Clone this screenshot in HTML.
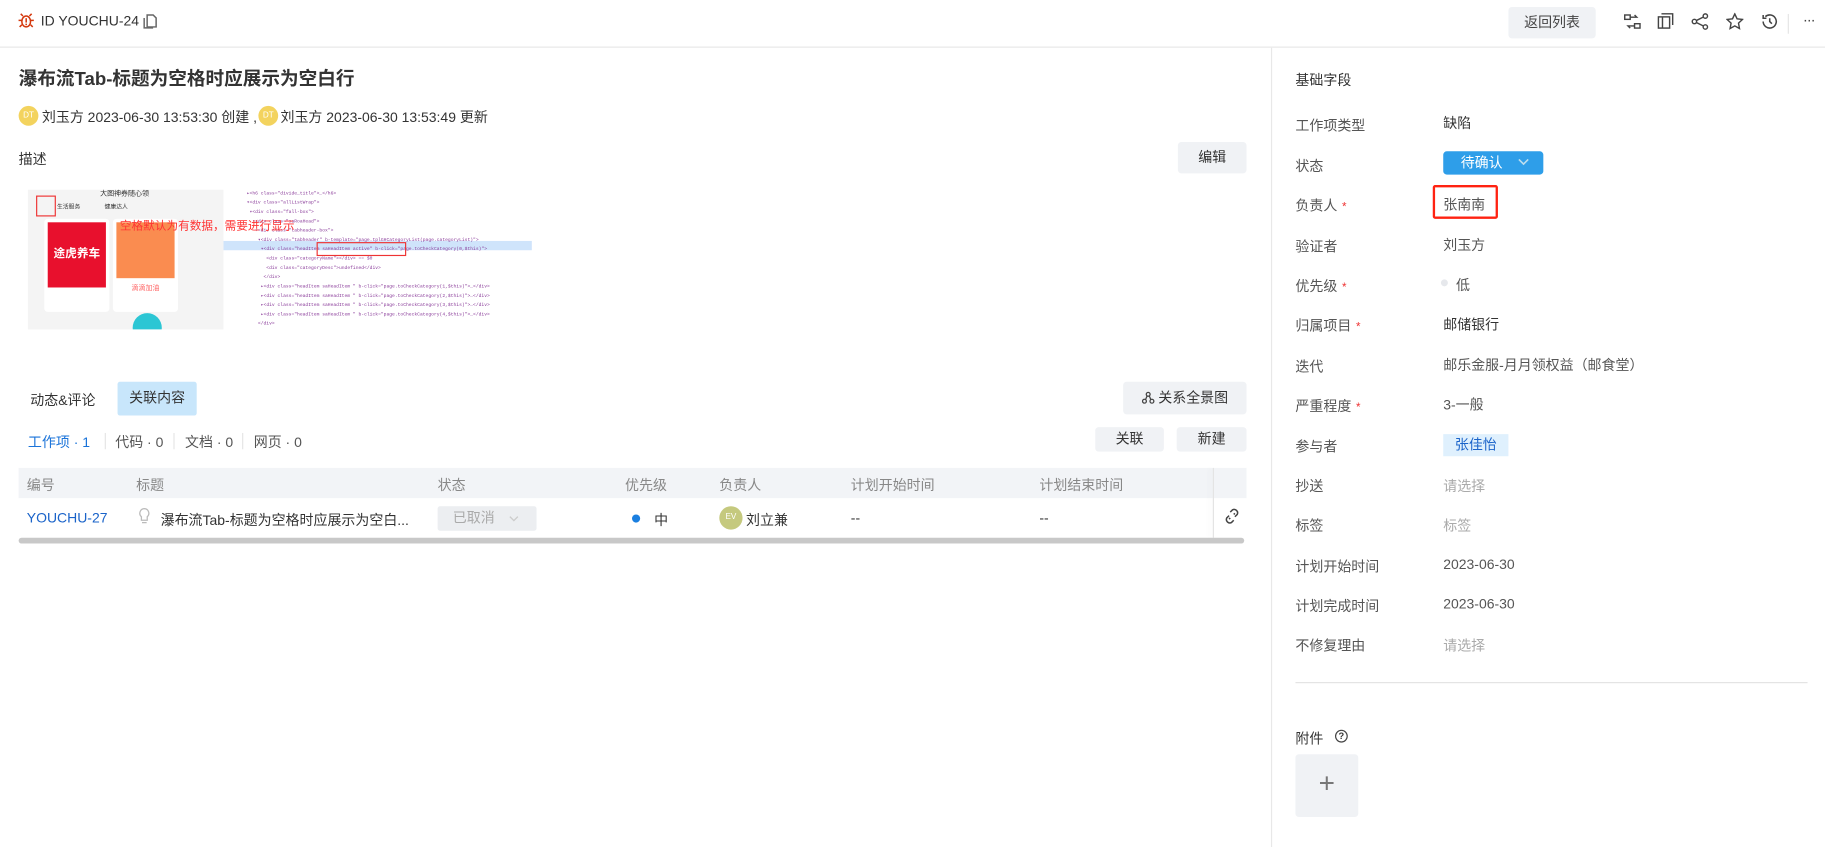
<!DOCTYPE html>
<html><head><meta charset="utf-8"><style>
*{box-sizing:border-box;margin:0;padding:0}
html,body{width:1825px;height:847px;overflow:hidden;background:#fff}
#w{width:1568px;height:728px;transform:scale(1.16390);transform-origin:0 0;position:relative;font-family:"Liberation Sans","Noto Sans CJK SC",sans-serif;color:#333;font-size:12px}
.a{position:absolute;white-space:nowrap}
.btn{position:absolute;background:#f0f2f5;border-radius:3px;text-align:center;color:#333;font-size:12px}
.lab{position:absolute;left:1113px;color:#555;font-size:12px}
.val{position:absolute;left:1240px;color:#333;font-size:12px}
.st{color:#e33;font-size:10px;margin-left:4px}
.gray{color:#aaa}
.th{position:absolute;top:408px;color:#888;font-size:12px}
.ico{position:absolute;top:11px}
</style></head><body><div id="w">
<svg class="a" style="left:15px;top:10px" width="15" height="15" viewBox="0 0 16 16"><g fill="none" stroke="#d4380d" stroke-width="1.4"><ellipse cx="8" cy="9" rx="4" ry="5"/><path d="M5 4l-2-2M11 4l2-2M4 8H1M12 8h3M4 12l-2 2M12 12l2 2"/></g><rect x="7.3" y="6" width="1.4" height="4" fill="#d4380d"/><rect x="7.3" y="11" width="1.4" height="1.4" fill="#d4380d"/></svg>
<div class="a" style="left:35px;top:11px;font-size:12px;color:#333">ID YOUCHU-24</div>
<svg class="a" style="left:123px;top:11px" width="12" height="14" viewBox="0 0 14 16"><path d="M4 2h6l3 3v9H4zM1 5v10h9" fill="none" stroke="#666" stroke-width="1.5"/></svg>
<div class="a" style="left:0;top:40px;width:1568px;height:1px;background:#e8e8e8"></div>
<div class="btn" style="left:1296px;top:6px;width:75px;height:27px;line-height:27px;font-size:12px;color:#444">返回列表</div>
<svg class="ico a" style="left:1395px" width="15" height="15" viewBox="0 0 16 16" fill="none" stroke="#444" stroke-width="1.3"><rect x="1" y="2" width="5" height="4"/><rect x="10" y="10" width="5" height="4"/><path d="M6 4h6l-2-2M10 12H4l2 2"/></svg>
<svg class="ico a" style="left:1424px" width="14" height="14" viewBox="0 0 16 16" fill="none" stroke="#444" stroke-width="1.4"><rect x="1" y="4" width="11" height="11"/><path d="M4 1h11v11"/><path d="M5 4v11"/></svg>
<svg class="ico a" style="left:1453px" width="15" height="15" viewBox="0 0 16 16" fill="none" stroke="#444" stroke-width="1.3"><circle cx="3" cy="8" r="2"/><circle cx="13" cy="3" r="2"/><circle cx="13" cy="13" r="2"/><path d="M5 7l6-3M5 9l6 3"/></svg>
<svg class="ico a" style="left:1483px" width="15" height="15" viewBox="0 0 16 16" fill="none" stroke="#444" stroke-width="1.3"><path d="M8 1l2.1 4.5 4.9.6-3.6 3.4.9 4.9L8 12l-4.3 2.4.9-4.9L1 6.1l4.9-.6z"/></svg>
<svg class="ico a" style="left:1513px" width="15" height="15" viewBox="0 0 16 16" fill="none" stroke="#444" stroke-width="1.4"><path d="M2 8a6 6 0 1 0 2-4.5M2 2v3h3M8 5v3l2 2"/></svg>
<div class="a" style="left:1536px;top:12px;width:1px;height:17px;background:#e5e5e5"></div>
<div class="a" style="left:1549px;top:9px;font-size:13px;color:#444;letter-spacing:-1px">···</div>
<div class="a" style="left:16px;top:54px;font-size:16px;font-weight:bold;color:#333">瀑布流Tab-标题为空格时应展示为空白行</div>
<div class="a" style="left:16px;top:91px;width:17px;height:17px;border-radius:50%;background:#f3d35e;color:#fff;font-size:7px;line-height:17px;text-align:center">DT</div>
<div class="a" style="left:36px;top:92px;font-size:12px;color:#333">刘玉方 2023-06-30 13:53:30 创建 ,</div>
<div class="a" style="left:222px;top:91px;width:17px;height:17px;border-radius:50%;background:#f3d35e;color:#fff;font-size:7px;line-height:17px;text-align:center">DT</div>
<div class="a" style="left:241px;top:92px;font-size:12px;color:#333">刘玉方 2023-06-30 13:53:49 更新</div>
<div class="a" style="left:16px;top:128px;font-size:12px;color:#333">描述</div>
<div class="btn" style="left:1012px;top:122px;width:59px;height:27px;line-height:27px;font-size:12px">编辑</div>
<div class="a" style="left:24px;top:163px;width:168px;height:120px;background:#f4f4f4;overflow:hidden">
 <div class="a" style="left:62px;top:-2px;font-size:6px;color:#333">大图神券随心领</div>
 <div class="a" style="left:7px;top:5px;width:17px;height:18px;border:1px solid #e33"></div>
 <div class="a" style="left:25px;top:11px;font-size:5px;color:#333">生活服务 &nbsp;&nbsp;&nbsp;&nbsp;&nbsp;&nbsp;&nbsp;&nbsp;&nbsp;&nbsp;&nbsp;&nbsp;&nbsp;&nbsp;健康达人</div>
 <div class="a" style="left:14px;top:25px;width:56px;height:80px;background:#fff;border-radius:3px"><div style="margin:3px;height:56px;background:#e8102d;color:#fff;font-size:10px;font-weight:bold;line-height:56px;text-align:center">途虎养车</div></div>
 <div class="a" style="left:73px;top:25px;width:56px;height:80px;background:#fff;border-radius:3px"><div style="margin:3px;height:48px;background:#fa8c50"></div><div style="font-size:6px;color:#f66;text-align:center">滴滴加油</div></div>
 <div class="a" style="left:90px;top:106px;width:25px;height:25px;border-radius:50%;background:#2cc6d4"></div>
</div>
<div class="a" style="left:192px;top:163px;width:265px;height:120px;background:#fff;overflow:hidden;font-family:'Liberation Mono',monospace;font-size:4px;color:#8a3c9a;line-height:8px;padding-left:20px">
 <div style="position:absolute;left:0;top:44px;width:265px;height:8px;background:#cfe4fb"></div>
 <div style="position:relative">▸&lt;h6 class="divide_title"&gt;…&lt;/h6&gt;<br>▾&lt;div class="allListWrap"&gt;<br>&nbsp;▾&lt;div class="fall-box"&gt;<br>&nbsp;&nbsp;▾&lt;div class="saRoaHead"&gt;<br>&nbsp;&nbsp;&nbsp;▾&lt;div class="tabheader-box"&gt;<br>&nbsp;&nbsp;&nbsp;&nbsp;▾&lt;div class="tabheader" b-template="page.tplGHCategoryList(page.categoryList)"&gt;<br>&nbsp;&nbsp;&nbsp;&nbsp;&nbsp;▾&lt;div class="headItem saHeadItem active" b-click="page.toCheckCategory(0,$this)"&gt;<br>&nbsp;&nbsp;&nbsp;&nbsp;&nbsp;&nbsp;&nbsp;&lt;div class="categoryName"&gt;&lt;/div&gt; == $0<br>&nbsp;&nbsp;&nbsp;&nbsp;&nbsp;&nbsp;&nbsp;&lt;div class="categoryDesc"&gt;undefined&lt;/div&gt;<br>&nbsp;&nbsp;&nbsp;&nbsp;&nbsp;&nbsp;&lt;/div&gt;<br>&nbsp;&nbsp;&nbsp;&nbsp;&nbsp;▸&lt;div class="headItem saHeadItem " b-click="page.toCheckCategory(1,$this)"&gt;…&lt;/div&gt;<br>&nbsp;&nbsp;&nbsp;&nbsp;&nbsp;▸&lt;div class="headItem saHeadItem " b-click="page.toCheckCategory(2,$this)"&gt;…&lt;/div&gt;<br>&nbsp;&nbsp;&nbsp;&nbsp;&nbsp;▸&lt;div class="headItem saHeadItem " b-click="page.toCheckCategory(3,$this)"&gt;…&lt;/div&gt;<br>&nbsp;&nbsp;&nbsp;&nbsp;&nbsp;▸&lt;div class="headItem saHeadItem " b-click="page.toCheckCategory(4,$this)"&gt;…&lt;/div&gt;<br>&nbsp;&nbsp;&nbsp;&nbsp;&lt;/div&gt;<br>&nbsp;&nbsp;&nbsp;&lt;/div&gt;<br>&nbsp;&nbsp;▸&lt;div style="width: 100%; height:100%; overflow: auto;"&gt;…&lt;/div&gt;</div>
 <div class="a" style="left:80px;top:45px;width:77px;height:12px;border:1px solid #e33"></div>
</div>
<div class="a" style="left:103px;top:185px;font-size:10px;color:#f33">空格默认为有数据，需要进行显示</div>
<div class="a" style="left:26px;top:335px;font-size:12px;color:#333">动态&amp;评论</div>
<div class="a" style="left:101px;top:328px;width:68px;height:29px;background:#c8e6fb;border-radius:2px;text-align:center;line-height:29px;font-size:12px;color:#333">关联内容</div>
<div class="btn" style="left:965px;top:328px;width:106px;height:28px;line-height:28px;font-size:12px"><svg width="11" height="11" viewBox="0 0 12 12" style="vertical-align:-1px" fill="none" stroke="#444" stroke-width="1.2"><circle cx="6" cy="3" r="1.8"/><circle cx="2.5" cy="9.5" r="1.8"/><circle cx="9.5" cy="9.5" r="1.8"/><path d="M5 4.5L3.5 8M7 4.5L8.5 8"/></svg> 关系全景图</div>
<div class="a" style="left:24px;top:371px;font-size:12px;color:#1a73d9">工作项 · 1</div>
<div class="a" style="left:90px;top:372px;width:1px;height:14px;background:#e5e5e5"></div>
<div class="a" style="left:99px;top:371px;font-size:12px;color:#555">代码 · 0</div>
<div class="a" style="left:149px;top:372px;width:1px;height:14px;background:#e5e5e5"></div>
<div class="a" style="left:159px;top:371px;font-size:12px;color:#555">文档 · 0</div>
<div class="a" style="left:208px;top:372px;width:1px;height:14px;background:#e5e5e5"></div>
<div class="a" style="left:218px;top:371px;font-size:12px;color:#555">网页 · 0</div>
<div class="btn" style="left:941px;top:367px;width:59px;height:21px;line-height:21px">关联</div>
<div class="btn" style="left:1011px;top:367px;width:60px;height:21px;line-height:21px">新建</div>
<div class="a" style="left:16px;top:402px;width:1055px;height:26px;background:#f2f4f7"></div>
<div class="a" style="left:1042px;top:402px;width:1px;height:60px;background:#e3e3e3;box-shadow:-3px 0 4px rgba(0,0,0,.06)"></div>
<div class="th" style="left:23px">编号</div><div class="th" style="left:117px">标题</div><div class="th" style="left:376px">状态</div><div class="th" style="left:537px">优先级</div><div class="th" style="left:618px">负责人</div><div class="th" style="left:731px">计划开始时间</div><div class="th" style="left:893px">计划结束时间</div>
<div class="a" style="left:23px;top:438px;color:#1a63c9">YOUCHU-27</div>
<svg class="a" style="left:119px;top:436px" width="10" height="15" viewBox="0 0 10 15" fill="none" stroke="#bbb" stroke-width="1.1"><path d="M5 1a4 4 0 0 0-2.5 7v3h5V8A4 4 0 0 0 5 1zM3 13h4"/></svg>
<div class="a" style="left:138px;top:438px;color:#333">瀑布流Tab-标题为空格时应展示为空白...</div>
<div class="a" style="left:376px;top:435px;width:85px;height:21px;background:#eceef1;border-radius:2px;color:#aaa;font-size:12px;line-height:21px;padding-left:13px">已取消<svg style="position:absolute;left:61px;top:8px" width="9" height="6" viewBox="0 0 10 7"><path d="M1 1l4 4 4-4" fill="none" stroke="#ccc" stroke-width="1.3"/></svg></div>
<div class="a" style="left:543px;top:442px;width:7px;height:7px;border-radius:50%;background:#1a7fe0"></div>
<div class="a" style="left:562px;top:438px;color:#333">中</div>
<div class="a" style="left:618px;top:435px;width:20px;height:20px;border-radius:50%;background:#c5c97e;color:#fff;font-size:7px;line-height:20px;text-align:center">EV</div>
<div class="a" style="left:641px;top:438px;color:#333">刘立兼</div>
<div class="a" style="left:731px;top:438px;color:#333">--</div>
<div class="a" style="left:893px;top:438px;color:#333">--</div>
<svg class="a" style="left:1051px;top:436px" width="15" height="15" viewBox="0 0 15 15" fill="none" stroke="#444" stroke-width="1.3"><path d="M6 4l2-2a3 3 0 0 1 4 4l-2 2M9 11l-2 2a3 3 0 0 1-4-4l2-2M5 10l1-1M9 6l1-1"/></svg>
<div class="a" style="left:16px;top:462px;width:1053px;height:5px;background:#c8c8c8;border-radius:3px"></div>
<div class="a" style="left:1092px;top:41px;width:1px;height:687px;background:#e8e8e8"></div>
<div class="a" style="left:1113px;top:60px;font-size:12px;color:#333">基础字段</div>
<div class="lab" style="top:99px">工作项类型</div><div class="val" style="top:97px">缺陷</div>
<div class="lab" style="top:134px">状态</div>
<div class="a" style="left:1240px;top:130px;width:86px;height:20px;background:#2e9ee9;border-radius:3px;color:#fff;font-size:12px;line-height:20px;padding-left:15px">待确认<svg style="position:absolute;left:64px;top:6px" width="10" height="7" viewBox="0 0 10 7"><path d="M1 1l4 4 4-4" fill="none" stroke="#bde" stroke-width="1.4"/></svg></div>
<div class="lab" style="top:168px">负责人<span class="st">*</span></div>
<div class="a" style="left:1231px;top:159px;width:56px;height:29px;border:2px solid #f21;border-radius:2px"></div>
<div class="val" style="top:167px;color:#555">张南南</div>
<div class="lab" style="top:203px">验证者</div><div class="val" style="top:202px;color:#555">刘玉方</div>
<div class="lab" style="top:237px">优先级<span class="st">*</span></div>
<div class="a" style="left:1238px;top:240px;width:6px;height:6px;border-radius:50%;background:#e6e8ec"></div><div class="a" style="left:1251px;top:236px;color:#555">低</div>
<div class="lab" style="top:271px">归属项目<span class="st">*</span></div><div class="val" style="top:270px">邮储银行</div>
<div class="lab" style="top:306px">迭代</div><div class="val" style="top:305px;color:#555">邮乐金服-月月领权益（邮食堂）</div>
<div class="lab" style="top:340px">严重程度<span class="st">*</span></div><div class="val" style="top:339px;color:#555">3-一般</div>
<div class="lab" style="top:375px">参与者</div><div class="a" style="left:1240px;top:373px;width:56px;height:19px;background:#dff0fd;color:#1a63c9;font-size:12px;line-height:19px;text-align:center">张佳怡</div>
<div class="lab" style="top:409px">抄送</div><div class="val gray" style="top:409px">请选择</div>
<div class="lab" style="top:443px">标签</div><div class="val gray" style="top:443px">标签</div>
<div class="lab" style="top:478px">计划开始时间</div><div class="val" style="top:478px;color:#555">2023-06-30</div>
<div class="lab" style="top:512px">计划完成时间</div><div class="val" style="top:512px;color:#555">2023-06-30</div>
<div class="lab" style="top:546px">不修复理由</div><div class="val gray" style="top:546px">请选择</div>
<div class="a" style="left:1113px;top:586px;width:440px;height:1px;background:#e3e3e3"></div>
<div class="a" style="left:1113px;top:626px;font-size:12px;color:#333">附件</div>
<div class="a" style="left:1147px;top:627px;width:11px;height:11px;border:1.2px solid #444;border-radius:50%;font-size:8px;line-height:9px;text-align:center;font-weight:bold">?</div>
<div class="a" style="left:1113px;top:648px;width:54px;height:54px;background:#f0f2f5;border-radius:3px;text-align:center;line-height:52px;font-size:24px;color:#777;font-weight:300">+</div>
</div></body></html>
